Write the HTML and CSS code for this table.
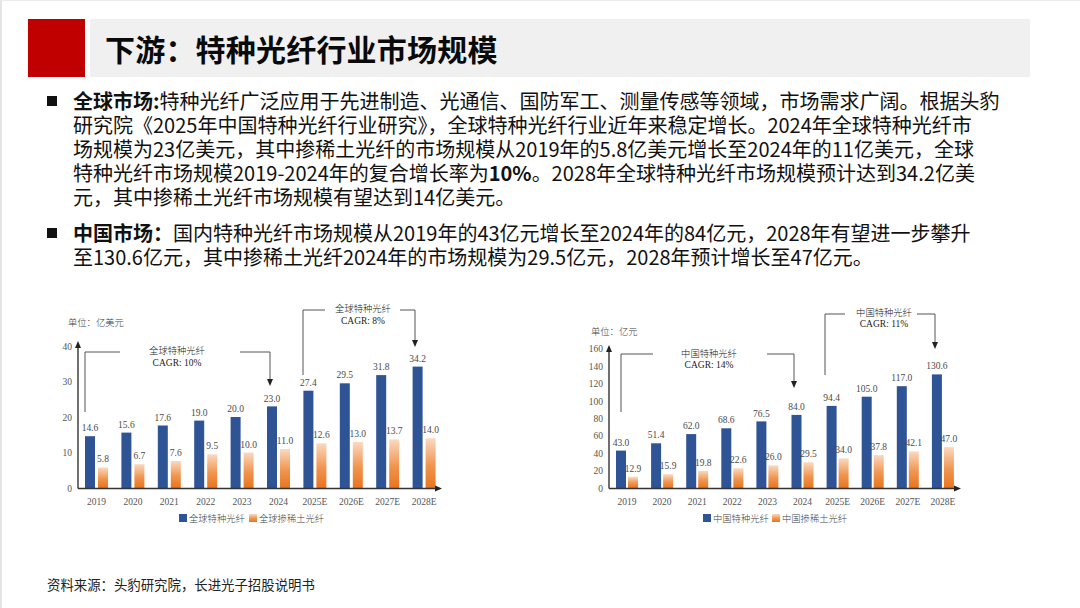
FILE: index.html
```html
<!DOCTYPE html>
<html lang="zh-CN">
<head>
<meta charset="utf-8">
<title>下游：特种光纤行业市场规模</title>
<link rel="stylesheet" href="styles.css">
</head>
<body>
<div class="slide">
  <header class="title-bar">
    <div class="red-block"></div>
    <div class="title-box"><h1>下游：特种光纤行业市场规模</h1></div>
  </header>

  <section class="content">
    <div class="bullet">
      <span class="sq"></span>
      <p><span class="ln"><b>全球市场:</b>特种光纤广泛应用于先进制造、光通信、国防军工、测量传感等领域，市场需求广阔。根据头豹</span><span class="ln">研究院《2025年中国特种光纤行业研究》，全球特种光纤行业近年来稳定增长。2024年全球特种光纤市</span><span class="ln">场规模为23亿美元，其中掺稀土光纤的市场规模从2019年的5.8亿美元增长至2024年的11亿美元，全球</span><span class="ln">特种光纤市场规模2019-2024年的复合增长率为<b>10%</b>。2028年全球特种光纤市场规模预计达到34.2亿美</span><span class="ln">元，其中掺稀土光纤市场规模有望达到14亿美元。</span></p>
    </div>
    <div class="bullet">
      <span class="sq"></span>
      <p><span class="ln"><b>中国市场：</b>国内特种光纤市场规模从2019年的43亿元增长至2024年的84亿元，2028年有望进一步攀升</span><span class="ln">至130.6亿元，其中掺稀土光纤2024年的市场规模为29.5亿元，2028年预计增长至47亿元。</span></p>
    </div>
  </section>

  <section class="charts">
    <svg class="chart chart-left" width="440" height="235" viewBox="40 295 440 235">
      <defs>
        <linearGradient id="og" x1="0" y1="0" x2="0" y2="1">
          <stop offset="0" stop-color="#fbd9c0"/>
          <stop offset="0.55" stop-color="#f0954f"/>
          <stop offset="1" stop-color="#e8741f"/>
        </linearGradient>
      </defs>
      <text class="cn" x="68" y="325.5">单位：亿美元</text>
      <g class="num tick">
        <text x="72" y="349.5">40</text>
        <text x="72" y="385">30</text>
        <text x="72" y="420.5">20</text>
        <text x="72" y="456">10</text>
        <text x="72" y="491.5">0</text>
      </g>
      <g class="blue">
        <rect x="85" y="436.2" width="10" height="51.8"/>
        <rect x="121.4" y="432.6" width="10" height="55.4"/>
        <rect x="157.8" y="425.5" width="10" height="62.5"/>
        <rect x="194.2" y="420.6" width="10" height="67.4"/>
        <rect x="230.6" y="417" width="10" height="71"/>
        <rect x="267" y="406.4" width="10" height="81.6"/>
        <rect x="303.4" y="390.7" width="10" height="97.3"/>
        <rect x="339.8" y="383.3" width="10" height="104.7"/>
        <rect x="376.2" y="375.1" width="10" height="112.9"/>
        <rect x="412.6" y="366.6" width="10" height="121.4"/>
      </g>
      <g class="orange">
        <rect x="98" y="467.4" width="10" height="20.6"/>
        <rect x="134.4" y="464.2" width="10" height="23.8"/>
        <rect x="170.8" y="461" width="10" height="27"/>
        <rect x="207.2" y="454.3" width="10" height="33.7"/>
        <rect x="243.6" y="452.5" width="10" height="35.5"/>
        <rect x="280" y="449" width="10" height="39"/>
        <rect x="316.4" y="443.3" width="10" height="44.7"/>
        <rect x="352.8" y="441.9" width="10" height="46.1"/>
        <rect x="389.2" y="439.4" width="10" height="48.6"/>
        <rect x="425.6" y="438.3" width="10" height="49.7"/>
      </g>
      <g class="num val">
        <text x="90" y="431">14.6</text>
        <text x="126.4" y="427.5">15.6</text>
        <text x="162.8" y="420.5">17.6</text>
        <text x="199.2" y="415.5">19.0</text>
        <text x="235.6" y="412">20.0</text>
        <text x="272" y="401.5">23.0</text>
        <text x="308.4" y="385.5">27.4</text>
        <text x="344.8" y="378">29.5</text>
        <text x="381.2" y="370">31.8</text>
        <text x="417.6" y="361.5">34.2</text>
        <text x="103" y="462">5.8</text>
        <text x="139.4" y="459">6.7</text>
        <text x="175.8" y="456">7.6</text>
        <text x="212.2" y="449">9.5</text>
        <text x="248.6" y="447.5">10.0</text>
        <text x="285" y="444">11.0</text>
        <text x="321.4" y="438">12.6</text>
        <text x="357.8" y="437">13.0</text>
        <text x="394.2" y="434">13.7</text>
        <text x="430.6" y="433">14.0</text>
      </g>
      <g class="axis">
        <line x1="78" y1="488.5" x2="78" y2="346"/>
        <line x1="78" y1="488.5" x2="436" y2="488.5"/>
      </g>
      <polygon class="head" points="78,341 75,348 81,348"/>
      <polygon class="head" points="442,488.5 435,485.5 435,491.5"/>
      <g class="num tick mid">
        <text x="96.5" y="505">2019</text>
        <text x="132.9" y="505">2020</text>
        <text x="169.3" y="505">2021</text>
        <text x="205.7" y="505">2022</text>
        <text x="242.1" y="505">2023</text>
        <text x="278.5" y="505">2024</text>
        <text x="314.9" y="505">2025E</text>
        <text x="351.3" y="505">2026E</text>
        <text x="387.7" y="505">2027E</text>
        <text x="424.1" y="505">2028E</text>
      </g>
      <polyline class="ann" points="85,412 85,352 120,352"/>
      <polyline class="ann" points="240,352 270,352 270,380"/>
      <polygon class="head" points="270,386 267,379 273,379"/>
      <text class="cn ann-t mid" x="177" y="354">全球特种光纤</text>
      <text class="num ann-t mid" x="177" y="365.5">CAGR: 10%</text>
      <polyline class="ann" points="303,375 303,310 325,310"/>
      <polyline class="ann" points="400,310 415,310 415,341"/>
      <polygon class="head" points="415,347 412,340 418,340"/>
      <text class="cn ann-t mid" x="363" y="311.5">全球特种光纤</text>
      <text class="num ann-t mid" x="363" y="324">CAGR: 8%</text>
      <rect class="blue" x="179" y="514" width="8" height="8"/>
      <text class="cn leg" x="189" y="521.5">全球特种光纤</text>
      <rect x="249" y="514" width="8" height="8" fill="url(#og)"/>
      <text class="cn leg" x="259" y="521.5">全球掺稀土光纤</text>
    </svg>

    <svg class="chart chart-right" width="410" height="235" viewBox="570 295 410 235">
      <defs>
        <linearGradient id="og2" x1="0" y1="0" x2="0" y2="1">
          <stop offset="0" stop-color="#fbd9c0"/>
          <stop offset="0.55" stop-color="#f0954f"/>
          <stop offset="1" stop-color="#e8741f"/>
        </linearGradient>
      </defs>
      <text class="cn" x="591" y="334.5">单位：亿元</text>
      <g class="num tick">
        <text x="603" y="352.3">160</text>
        <text x="603" y="369.7">140</text>
        <text x="603" y="387.1">120</text>
        <text x="603" y="404.5">100</text>
        <text x="603" y="421.9">80</text>
        <text x="603" y="439.3">60</text>
        <text x="603" y="456.7">40</text>
        <text x="603" y="474.1">20</text>
        <text x="603" y="491.5">0</text>
      </g>
      <g class="blue">
        <rect x="616" y="450.6" width="10" height="37.4"/>
        <rect x="651.1" y="443.3" width="10" height="44.7"/>
        <rect x="686.2" y="434.1" width="10" height="53.9"/>
        <rect x="721.3" y="428.3" width="10" height="59.7"/>
        <rect x="756.4" y="421.4" width="10" height="66.6"/>
        <rect x="791.5" y="414.9" width="10" height="73.1"/>
        <rect x="826.6" y="405.9" width="10" height="82.1"/>
        <rect x="861.7" y="396.7" width="10" height="91.3"/>
        <rect x="896.8" y="386.2" width="10" height="101.8"/>
        <rect x="931.9" y="374.4" width="10" height="113.6"/>
      </g>
      <g class="orange2">
        <rect x="628" y="476.8" width="10" height="11.2"/>
        <rect x="663.1" y="474.2" width="10" height="13.8"/>
        <rect x="698.2" y="470.8" width="10" height="17.2"/>
        <rect x="733.3" y="468.3" width="10" height="19.7"/>
        <rect x="768.4" y="465.4" width="10" height="22.6"/>
        <rect x="803.5" y="462.3" width="10" height="25.7"/>
        <rect x="838.6" y="458.4" width="10" height="29.6"/>
        <rect x="873.7" y="455.1" width="10" height="32.9"/>
        <rect x="908.8" y="451.4" width="10" height="36.6"/>
        <rect x="943.9" y="447.1" width="10" height="40.9"/>
      </g>
      <g class="num val">
        <text x="621" y="445.5">43.0</text>
        <text x="656.1" y="438">51.4</text>
        <text x="691.2" y="429">62.0</text>
        <text x="726.3" y="423">68.6</text>
        <text x="761.4" y="416.5">76.5</text>
        <text x="796.5" y="409.5">84.0</text>
        <text x="831.6" y="400.5">94.4</text>
        <text x="866.7" y="391.5">105.0</text>
        <text x="901.8" y="381">117.0</text>
        <text x="936.9" y="369">130.6</text>
        <text x="633" y="471.5">12.9</text>
        <text x="668.1" y="469">15.9</text>
        <text x="703.2" y="465.5">19.8</text>
        <text x="738.3" y="463">22.6</text>
        <text x="773.4" y="460">26.0</text>
        <text x="808.5" y="457">29.5</text>
        <text x="843.6" y="453">34.0</text>
        <text x="878.7" y="450">37.8</text>
        <text x="913.8" y="446">42.1</text>
        <text x="948.9" y="442">47.0</text>
      </g>
      <g class="axis">
        <line x1="609" y1="488.5" x2="609" y2="350"/>
        <line x1="609" y1="488.5" x2="955" y2="488.5"/>
      </g>
      <polygon class="head" points="609,345 606,352 612,352"/>
      <polygon class="head" points="961,488.5 954,485.5 954,491.5"/>
      <g class="num tick mid">
        <text x="627" y="505">2019</text>
        <text x="662.1" y="505">2020</text>
        <text x="697.2" y="505">2021</text>
        <text x="732.3" y="505">2022</text>
        <text x="767.4" y="505">2023</text>
        <text x="802.5" y="505">2024</text>
        <text x="837.6" y="505">2025E</text>
        <text x="872.7" y="505">2026E</text>
        <text x="907.8" y="505">2027E</text>
        <text x="942.9" y="505">2028E</text>
      </g>
      <polyline class="ann" points="621,412 621,354 653,354"/>
      <polyline class="ann" points="767,354 794,354 794,382"/>
      <polygon class="head" points="794,388 791,381 797,381"/>
      <text class="cn ann-t mid" x="709" y="356.5">中国特种光纤</text>
      <text class="num ann-t mid" x="709" y="368">CAGR: 14%</text>
      <polyline class="ann" points="825,375 825,314 845,314"/>
      <polyline class="ann" points="917,314 935,314 935,343"/>
      <polygon class="head" points="935,349 932,342 938,342"/>
      <text class="cn ann-t mid" x="884" y="315.5">中国特种光纤</text>
      <text class="num ann-t mid" x="884" y="327">CAGR: 11%</text>
      <rect class="blue" x="703" y="514" width="8" height="8"/>
      <text class="cn leg" x="713" y="521.5">中国特种光纤</text>
      <rect x="772" y="514" width="8" height="8" fill="url(#og2)"/>
      <text class="cn leg" x="782" y="521.5">中国掺稀土光纤</text>
    </svg>
  </section>

  <footer class="source">资料来源：头豹研究院，长进光子招股说明书</footer>
</div>
</body>
</html>
```
FILE: styles.css
```css
* { box-sizing: border-box; }
html, body {
  margin: 0;
  padding: 0;
  background: #ffffff;
}
body {
  font-family: "Noto Sans CJK SC", "Noto Sans", sans-serif;
  color: #111;
}
.slide {
  width: 1080px;
  height: 608px;
  overflow: hidden;
  background: #fff;
  border-left: 2px solid #e4e4e4;
  border-top: 1px solid #ececec;
}

/* header */
.title-bar {
  display: flex;
  align-items: stretch;
  height: 58px;
  margin-top: 18px;
  padding-left: 26px;
}
.red-block {
  width: 57px;
  background: #c00000;
  flex: none;
}
.title-box {
  width: 940px;
  margin-left: 5px;
  background: #f0f0f0;
  display: flex;
  align-items: center;
  padding-left: 15px;
}
.title-box h1 {
  margin: 0;
  font-size: 30px;
  font-weight: 700;
  line-height: 1;
  color: #0a0a0a;
  letter-spacing: 0.2px;
}

/* body text */
.content {
  padding: 12px 0 0 45px;
}
.bullet {
  display: flex;
  align-items: flex-start;
}
.bullet + .bullet {
  margin-top: 12px;
}
.sq {
  flex: none;
  width: 10px;
  height: 10px;
  margin-top: 7px;
  margin-right: 16px;
  background: #111;
}
.bullet p {
  margin: 0;
  font-size: 20px;
  line-height: 24px;
  white-space: nowrap;
  color: #111;
}
.bullet .ln {
  display: block;
  height: 24px;
  line-height: 24px;
  overflow: visible;
}
.bullet b {
  font-weight: 700;
  display: inline-block;
  line-height: 24px;
}

/* charts */
.charts {
  display: flex;
  margin-top: 26px;
  padding-left: 38px;
  gap: 90px;
  height: 235px;
}
.chart {
  display: block;
  flex: none;
}
.chart text {
  font-size: 9.5px;
  fill: #404040;
}
.chart .cn {
  font-family: "Noto Sans CJK SC", sans-serif;
  font-weight: 300;
  font-size: 9.3px;
}
.chart .num {
  font-family: "Liberation Serif", "Times New Roman", serif;
}
.chart .tick text {
  text-anchor: end;
  fill: #555;
}
.chart .tick.mid text,
.chart .val text,
.chart .mid {
  text-anchor: middle;
}
.chart .val text {
  fill: #4a4a4a;
}
.chart .ann-t {
  fill: #222;
}
.chart .leg {
  fill: #444;
}
.blue rect, rect.blue {
  fill: #2e5496;
}
.orange rect {
  fill: url(#og);
}
.orange2 rect {
  fill: url(#og2);
}
.axis line {
  stroke: #333;
  stroke-width: 1.4;
}
.head {
  fill: #222;
}
.ann {
  fill: none;
  stroke: #555;
  stroke-width: 1;
}

/* footer */
.source {
  margin-top: 45px;
  padding-left: 45px;
  font-size: 13.4px;
  line-height: 18px;
  color: #222;
}
```
